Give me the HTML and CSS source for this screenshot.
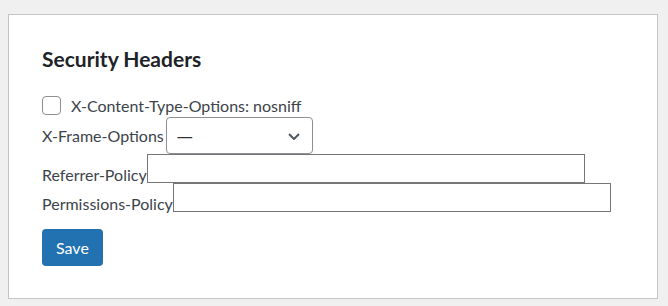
FILE: index.html
```html
<!DOCTYPE html>
<html lang="en">
<head>
<meta charset="UTF-8">
<title>Security Headers</title>
<link rel="stylesheet" href="styles.css">
</head>
<body>
  <div class="wrap">
    <form class="card">
      <h2>Security Headers</h2>

      <label class="row check-row">
        <input type="checkbox" class="check">
        <span>X-Content-Type-Options: nosniff</span>
      </label>

      <div class="row select-row">
        <label for="xfo">X-Frame-Options</label>
        <div class="select">
          <select id="xfo">
            <option>&mdash;</option>
            <option>DENY</option>
            <option>SAMEORIGIN</option>
          </select>
          <svg class="chevron" width="12" height="7" viewBox="0 0 12 7"><path d="M1 1l5 5 5-5" fill="none" stroke="#50575e" stroke-width="2"/></svg>
        </div>
      </div>

      <div class="row text-row">
        <label for="rp">Referrer-Policy</label>
        <input type="text" id="rp" class="field">
      </div>

      <div class="row text-row">
        <label for="pp">Permissions-Policy</label>
        <input type="text" id="pp" class="field">
      </div>

      <button type="button" class="save">Save</button>
    </form>
  </div>
</body>
</html>
```

FILE: styles.css
```css
body { margin: 0; padding: 14px 10px 0 8px; background: #f0f0f1; color: #3c434a; font-family: Lato, sans-serif; font-size: 16px; }

.card { width: 650px; box-sizing: border-box; background: #fff; border: 1px solid #c3c4c7; padding: 30px 33px 32px; }
.card h2 { margin: 0 0 21px; font-size: 21px; font-weight: 700; line-height: 1.3; color: #1d2327; }

.row { display: flex; }
.check-row { align-items: center; height: 24px; }
.check { appearance: none; width: 19px; height: 19px; margin: 0 10px 0 0; border: 1px solid #8c8f94; border-radius: 4px; background: #fff; box-sizing: border-box; }

.select-row { align-items: center; }
.select { position: relative; margin-left: 2px; }
.select select { appearance: none; width: 147px; height: 37px; margin: 0; padding: 0 24px 0 10px; border: 1px solid #8c8f94; border-radius: 4px; background: #fff; font: 16px "Noto Sans", sans-serif; color: #2c3338; }
.chevron { position: absolute; right: 13px; top: 16px; pointer-events: none; }

.text-row { align-items: flex-end; }
.text-row label { line-height: 1; }
.field { width: 438px; height: 29px; margin: 0; padding: 0 6px; box-sizing: border-box; border: 1px solid #767676; border-radius: 0; font: inherit; }

.save { display: block; margin-top: 17px; height: 37px; padding: 0 14px; border: none; border-radius: 4px; background: #2271b1; color: #fff; font: inherit; font-size: 16px; }
```
